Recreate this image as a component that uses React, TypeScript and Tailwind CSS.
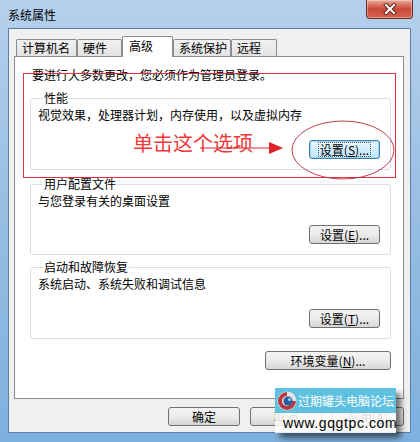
import type { ReactNode } from "react";

const font = "font-['Noto_Sans_CJK_SC','Noto_Sans',sans-serif]";

function WinButton({ children, className = "", focused = false }: { children: ReactNode; className?: string; focused?: boolean }) {
  return (
    <div
      className={
        "flex h-[19px] items-center justify-center rounded-[3px] border text-[12px] leading-[16px] text-black " +
        (focused
          ? "border-[#3c7fb1] bg-gradient-to-b from-[#eaf6fd] to-[#bee6fd] shadow-[inset_0_0_0_1px_#9fd6f2] "
          : "border-[#707070] bg-gradient-to-b from-[#f4f4f4] via-[#ebebeb] to-[#d6d6d6] ") +
        className
      }
    >
      {children}
    </div>
  );
}

function Tab({ label, width, selected = false }: { label: string; width: string; selected?: boolean }) {
  if (selected) {
    return (
      <div className={`relative z-10 -mb-px h-[21px] ${width} rounded-t-[2px] border border-b-0 border-[#898c95] bg-white pl-[6px] pt-[1px] text-[12px] leading-[16px]`}>
        {label}
      </div>
    );
  }
  return (
    <div className={`h-[17px] ${width} rounded-t-[2px] border border-b-0 border-[#898c95] bg-gradient-to-b from-[#f2f2f2] to-[#e3e3e3] pl-[5px] text-[12px] leading-[16px]`}>
      {label}
    </div>
  );
}

function Group({ title, text, button, className = "", gap = "mt-[16px]" }: { title: string; text: string; button: ReactNode; className?: string; gap?: string }) {
  return (
    <fieldset className={`rounded-[3px] border border-[#d5dfe5] pb-[10px] pl-[7px] pr-[10px] ${className}`}>
      <legend className="ml-[5px] px-[1px] text-[12px] leading-[16px]">{title}</legend>
      <div className="mt-[1px] text-[12px] leading-[16px]">{text}</div>
      <div className={`flex justify-end ${gap}`}>{button}</div>
    </fieldset>
  );
}

export default function App() {
  return (
    <div className={`relative flex h-[442px] w-[420px] flex-col overflow-hidden bg-gradient-to-b from-[#b4d0ec] via-[#97bde2] to-[#7eb0de] text-black ${font}`}>
      {/* title bar */}
      <div className="flex h-[28px] shrink-0 justify-between">
        <div className="self-center pl-[8px] pt-[2px] text-[12px] leading-[16px]">系统属性</div>
        <div className="mr-[7px] flex h-[19px] w-[47px] items-center justify-center rounded-b-[4px] border border-t-0 border-[#6e2a20] bg-gradient-to-b from-[#e9a897] via-[#c9473a] to-[#d8624f] shadow-[inset_0_0_0_1px_rgba(255,255,255,0.35)]">
          <svg width="14" height="12" viewBox="0 0 14 12">
            <path d="M3 2 L11 10 M11 2 L3 10" stroke="#5a1c14" strokeWidth="4" strokeLinecap="square" />
            <path d="M3 2 L11 10 M11 2 L3 10" stroke="#ffffff" strokeWidth="2.2" strokeLinecap="square" />
          </svg>
        </div>
      </div>

      {/* client area */}
      <div className="mb-[9px] ml-[8px] mr-[9px] flex flex-1 flex-col border border-[#5b7fa5] bg-[#f0f0f0] pt-[7px]">
        <div className="ml-[5px] mr-[6px]">
          <div className="flex items-end pl-[2px]">
            <Tab label="计算机名" width="w-[61px]" />
            <Tab label="硬件" width="w-[45px]" />
            <Tab label="高级" width="w-[51px]" selected />
            <Tab label="系统保护" width="w-[58px]" />
            <Tab label="远程" width="w-[46px]" />
          </div>
          <div className="h-[343px] border border-[#898c95] bg-white pl-[15px] pr-[12px] pt-[10px]">
            <div className="pl-[2px] text-[12px] leading-[16px]">要进行大多数更改，您必须作为管理员登录。</div>
            <Group
              className="mt-[7px]"
              title="性能"
              text="视觉效果，处理器计划，内存使用，以及虚拟内存"
              gap="mt-[17px]"
              button={
                <WinButton focused className="w-[71px]">
                  <span className="rounded-[1px] border border-dotted border-[#555] px-[1px] leading-[13px]">
                    设置(<u>S</u>)...
                  </span>
                </WinButton>
              }
            />
            <Group
              className="mt-[6px]"
              title="用户配置文件"
              text="与您登录有关的桌面设置"
              button={<WinButton className="w-[71px]">设置(<u>E</u>)...</WinButton>}
            />
            <Group
              className="mt-[4px]"
              title="启动和故障恢复"
              text="系统启动、系统失败和调试信息"
              gap="mt-[17px]"
              button={<WinButton className="w-[71px]">设置(<u>T</u>)...</WinButton>}
            />
            <div className="mt-[12px] flex justify-end">
              <WinButton className="w-[126px]">环境变量(<u>N</u>)...</WinButton>
            </div>
          </div>
          <div className="mt-[8px] flex justify-end gap-[10px]">
            <WinButton className="w-[72px]">确定</WinButton>
            <WinButton className="w-[72px]">取消</WinButton>
            <WinButton className="w-[72px] text-[#8a8a8a]">应用(<u>A</u>)</WinButton>
          </div>
        </div>
      </div>

      {/* red annotation */}
      <div className="absolute left-[23px] top-[73px] h-[105px] w-[373px] border border-[#d8343c]" />
      <div className="absolute left-[133px] top-[131px] text-[20px] leading-[24px] text-[#ee3a3a]">单击这个选项</div>
      <svg className="absolute left-[195px] top-[138px]" width="100" height="20" viewBox="0 0 100 20">
        <line x1="5" y1="10" x2="76" y2="10" stroke="#d9252e" strokeWidth="1.2" />
        <path d="M74 4 L88 10 L74 16 Z" fill="#e0202a" />
      </svg>
      <svg className="absolute left-[290px] top-[119px]" width="106" height="62" viewBox="0 0 106 62">
        <ellipse cx="53" cy="31" rx="51" ry="29" fill="none" stroke="#b8283a" strokeWidth="0.9" />
      </svg>

      {/* watermark */}
      <div className="absolute left-[275px] top-[388px] flex h-[45px] w-[121px] flex-col shadow-[5px_5px_6px_rgba(0,0,0,0.55)]">
        <div className="flex h-[25px] items-center overflow-hidden whitespace-nowrap bg-[#5ec1df] pl-[2px]">
          <svg width="20" height="20" viewBox="0 0 20 20" className="shrink-0">
            <circle cx="10" cy="10" r="9.5" fill="#e9e3e3" />
            <path d="M10 1 A9 9 0 1 0 19 10 L15 10 A5 5 0 1 1 10 5 Z" fill="#b83a44" />
            <circle cx="11" cy="10" r="4.5" fill="#1f5f9e" />
            <circle cx="12.5" cy="8.5" r="1.6" fill="#9fd0f0" />
          </svg>
          <span className="ml-[1px] text-[12px] leading-[16px] text-white">过期罐头电脑论坛</span>
        </div>
        <div className="flex flex-1 items-center whitespace-nowrap bg-white/85 pl-[8px] font-['Liberation_Sans',sans-serif] text-[14px] leading-[16px] tracking-[0.6px] text-black">
          www.gqgtpc.com
        </div>
      </div>
    </div>
  );
}
